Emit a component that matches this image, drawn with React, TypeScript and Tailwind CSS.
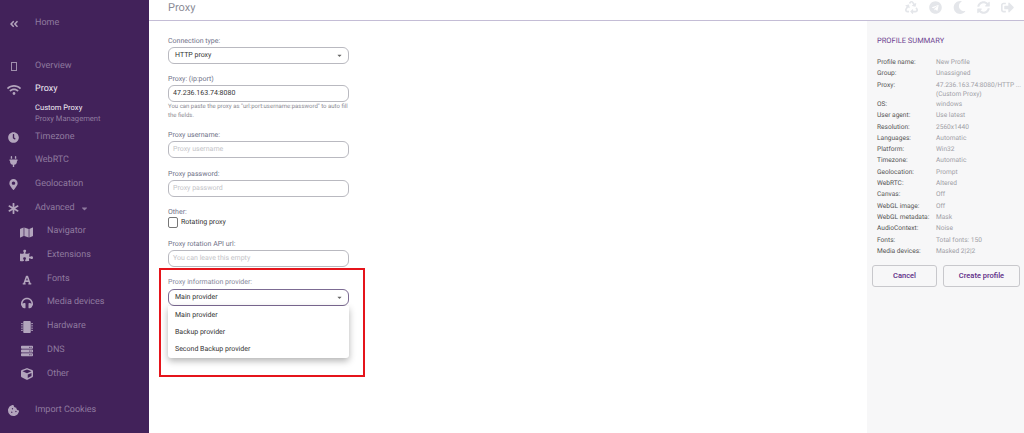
import type { ReactNode } from "react";
import {
  FaAngleDoubleLeft, FaAsterisk, FaCaretDown, FaClock, FaCookieBite, FaCube, FaFont, FaHeadphones, FaMap,
  FaMapMarkerAlt, FaMicrochip, FaMoon, FaPlug, FaPuzzlePiece, FaRecycle, FaServer, FaSignOutAlt, FaSyncAlt,
  FaTelegram, FaWifi,
} from "react-icons/fa";

const SUB_ITEMS = [
  { icon: FaMap, label: "Navigator", size: 13 },
  { icon: FaPuzzlePiece, label: "Extensions", size: 13 },
  { icon: FaFont, label: "Fonts", size: 10 },
  { icon: FaHeadphones, label: "Media devices", size: 12 },
  { icon: FaMicrochip, label: "Hardware", size: 12 },
  { icon: FaServer, label: "DNS", size: 12 },
  { icon: FaCube, label: "Other", size: 12 },
];

const SUMMARY = [
  ["Profile name:", "New Profile"],
  ["Group:", "Unassigned"],
  ["Proxy:", "47.236.163.74:8080/HTTP ...\n(Custom Proxy)"],
  ["OS:", "windows"],
  ["User agent:", "Use latest"],
  ["Resolution:", "2560x1440"],
  ["Languages:", "Automatic"],
  ["Platform:", "Win32"],
  ["Timezone:", "Automatic"],
  ["Geolocation:", "Prompt"],
  ["WebRTC:", "Altered"],
  ["Canvas:", "Off"],
  ["WebGL image:", "Off"],
  ["WebGL metadata:", "Mask"],
  ["AudioContext:", "Noise"],
  ["Fonts:", "Total fonts: 150"],
  ["Media devices:", "Masked 2|2|2"],
];

function NavRow({ icon, label, active }: { icon: ReactNode; label: ReactNode; active?: boolean }) {
  return (
    <div className={`flex h-[23.7px] items-center text-[9px] ${active ? "text-[#f1ecf4]" : "text-[#8f7a9f]"}`}>
      <span className="flex w-[35px] shrink-0 justify-center pr-[8px] text-[#b3a5bd]">{icon}</span>
      {label}
    </div>
  );
}

function SubRow({ icon, label }: { icon: ReactNode; label: string }) {
  return (
    <div className="flex h-[23.7px] items-center pl-[20px] text-[9px] text-[#8f7a9f]">
      <span className="mr-[14px] flex w-[13px] shrink-0 justify-center text-[#b3a5bd]">{icon}</span>
      {label}
    </div>
  );
}

function Field({ label, placeholder, value }: { label: string; placeholder?: string; value?: string }) {
  return (
    <div>
      <div className="h-[7px] text-[7px] leading-[9px] text-[#6f7288]">{label}</div>
      <div className={`mt-[3px] flex h-[17px] items-center rounded-[6px] border border-[#b9b9c0] pl-[4px] text-[7px] ${value ? "text-[#333]" : "text-[#c4c4c8]"}`}>
        {value ?? placeholder}
      </div>
    </div>
  );
}

export default function App() {
  return (
    <div className="flex h-[433px] w-[1024px] overflow-hidden bg-white font-['Roboto',sans-serif] [text-rendering:geometricPrecision]">
      <aside className="flex w-[149px] shrink-0 flex-col bg-[#42225a] pt-[12px]">
        <NavRow icon={<FaAngleDoubleLeft size={10} />} label="Home" />
        <div className="h-[19px]" />
        <NavRow icon={<span className="h-[9px] w-[6px] border border-[#a090ad]" />} label="Overview" />
        <NavRow active icon={<FaWifi size={14} />} label="Proxy" />
        <div className="flex flex-col pb-[1.5px] pl-[35px] pt-[1px] text-[7.6px] leading-[10.5px] text-[#8f7a9f]">
          <span className="text-[#f1ecf4]">Custom Proxy</span>
          <span>Proxy Management</span>
        </div>
        <NavRow icon={<FaClock size={11} />} label="Timezone" />
        <NavRow icon={<FaPlug size={11} />} label="WebRTC" />
        <NavRow icon={<FaMapMarkerAlt size={11} />} label="Geolocation" />
        <NavRow
          icon={<FaAsterisk size={11} />}
          label={
            <span className="flex items-center gap-[5px]">
              Advanced <FaCaretDown size={9} />
            </span>
          }
        />
        {SUB_ITEMS.map((item) => (
          <SubRow key={item.label} icon={<item.icon size={item.size} />} label={item.label} />
        ))}
        <div className="h-[13px]" />
        <NavRow icon={<FaCookieBite size={11} />} label="Import Cookies" />
      </aside>

      <div className="flex min-w-0 flex-1 flex-col">
        <header className="flex h-[21px] shrink-0 items-center justify-between border-b border-[#c4bdd6] pl-[19px] pr-[10px]">
          <span className="pb-[4px] text-[11px] leading-[14px] text-[#8b8b96]">Proxy</span>
          <div className="flex items-center gap-[11px] pb-[6px] text-[#e4e6ea]">
            <FaRecycle size={13} />
            <FaTelegram size={13} />
            <FaMoon size={13} />
            <FaSyncAlt size={13} />
            <FaSignOutAlt size={13} />
          </div>
        </header>

        <div className="flex min-h-0 flex-1">
          <main className="relative flex-1 pl-[19px] pt-[16px]">
            <div className="flex w-[181px] flex-col">
              <div>
                <div className="h-[7px] text-[7px] leading-[9px] text-[#6f7288]">Connection type:</div>
                <div className="mt-[3px] flex h-[17px] items-center justify-between rounded-[6px] border border-[#b9b9c0] pl-[6px] pr-[5px] text-[7px] text-[#333]">
                  HTTP proxy <FaCaretDown size={7} className="text-[#666]" />
                </div>
              </div>
              <div className="mt-[11px]">
                <Field label="Proxy: (ip:port)" value="47.236.163.74:8080" />
                <p className="w-[181px] text-[6px] leading-[9px] text-[#8a8a92]">
                  You can paste the proxy as "url:port:username:password" to auto fill the fields.
                </p>
              </div>
              <div className="mt-[11px]">
                <Field label="Proxy username:" placeholder="Proxy username" />
              </div>
              <div className="mt-[12px]">
                <Field label="Proxy password:" placeholder="Proxy password" />
              </div>
              <div className="mt-[11px] h-[7px] text-[7px] leading-[9px] text-[#6f7288]">Other:</div>
              <div className="mt-[2px] flex items-center gap-[3px] text-[7px] text-[#333]">
                <span className="h-[11px] w-[10px] rounded-[2px] border border-[#777]" />
                Rotating proxy
              </div>
              <div className="mt-[12px]">
                <Field label="Proxy rotation API url:" placeholder="You can leave this empty" />
              </div>
              <div className="mt-[12px]">
                <div className="h-[7px] text-[7px] leading-[7px] text-[#85879a]">Proxy information provider:</div>
                <div className="mt-[3px] flex h-[17px] items-center justify-between rounded-[6px] border border-[#7c6b93] pl-[6px] pr-[5px] text-[7px] text-[#333]">
                  Main provider <FaCaretDown size={7} className="text-[#666]" />
                </div>
              </div>
            </div>

            {/* dropdown menu + red annotation box */}
            <div className="absolute left-[19px] top-[285px] flex h-[52px] w-[181px] flex-col justify-center rounded-b-[3px] bg-white pl-[7px] text-[7px] text-[#333] shadow-[0_3px_7px_rgba(0,0,0,0.3)]">
              <div className="flex h-[17px] items-center">Main provider</div>
              <div className="flex h-[17px] items-center">Backup provider</div>
              <div className="flex h-[17px] items-center">Second Backup provider</div>
            </div>
            <div className="absolute left-[10px] top-[247px] h-[109px] w-[206px] border-2 border-[#e5141b]" />
          </main>

          <aside className="w-[157px] shrink-0 bg-[#f7f7f8] pl-[3px] pr-[4px] pt-[15px]">
            <h2 className="pl-[7px] text-[7.5px] leading-[10px] text-[#6d3f91]">PROFILE SUMMARY</h2>
            <dl className="mt-[11px] pl-[7px] text-[6.6px] leading-[11.3px]">
              {SUMMARY.map(([k, v]) => (
                <div key={k} className="flex">
                  <dt className="w-[59px] shrink-0 whitespace-nowrap text-[#555]">{k}</dt>
                  <dd className={`whitespace-pre text-[#a0a0a6] ${k === "Proxy:" ? "pb-[0.35px] pt-[1px] leading-[9px]" : ""}`}>{v}</dd>
                </div>
              ))}
            </dl>
            <div className="mt-[8px] flex gap-[6px] pl-[2px]">
              <button className="h-[22px] w-[65px] rounded-[3px] border border-[#c8c8cc] text-[7.5px] font-medium text-[#5c2a86]">Cancel</button>
              <button className="h-[22px] w-[77px] rounded-[3px] border border-[#c8c8cc] text-[7.5px] font-medium text-[#5c2a86]">Create profile</button>
            </div>
          </aside>
        </div>
      </div>
    </div>
  );
}
